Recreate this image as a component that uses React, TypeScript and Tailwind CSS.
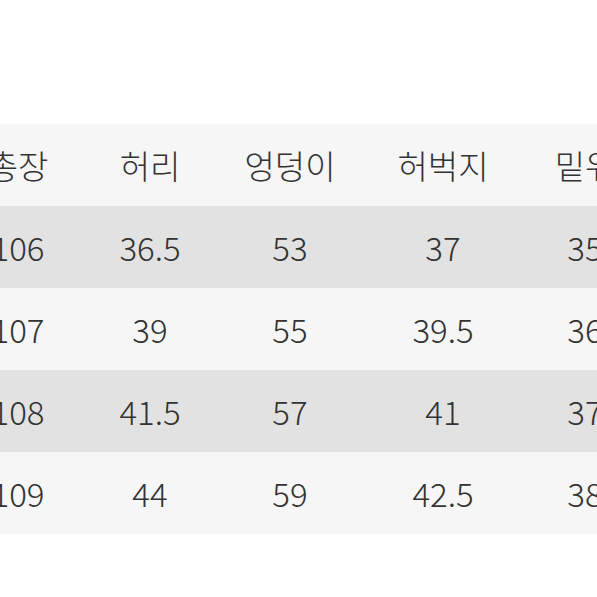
const header = ["총장", "허리", "엉덩이", "허벅지", "밑위"];

const rows = [
  ["106", "36.5", "53", "37", "35"],
  ["107", "39", "55", "39.5", "36"],
  ["108", "41.5", "57", "41", "37"],
  ["109", "44", "59", "42.5", "38"],
];

function Row({ cells, shaded }: { cells: string[]; shaded: boolean }) {
  return (
    <div
      className={`grid h-[82px] grid-cols-[150px_114px_166px_140px_144px] items-center ${
        shaded ? "bg-[#e2e2e2]" : "bg-[#f6f6f6]"
      }`}
    >
      {cells.map((c, i) => (
        <div key={i} className="text-center whitespace-nowrap">
          {c}
        </div>
      ))}
    </div>
  );
}

export default function App() {
  return (
    <div className="h-[597px] w-[597px] overflow-hidden bg-white">
      <div
        className="mt-[124px] ml-[-57px] w-[714px] text-[33px] leading-none font-light text-[#333333]"
        style={{ fontFamily: '"Noto Sans CJK KR", "Noto Sans", sans-serif' }}
      >
        <Row cells={header} shaded={false} />
        {rows.map((r, i) => (
          <Row key={i} cells={r} shaded={i % 2 === 0} />
        ))}
      </div>
    </div>
  );
}
